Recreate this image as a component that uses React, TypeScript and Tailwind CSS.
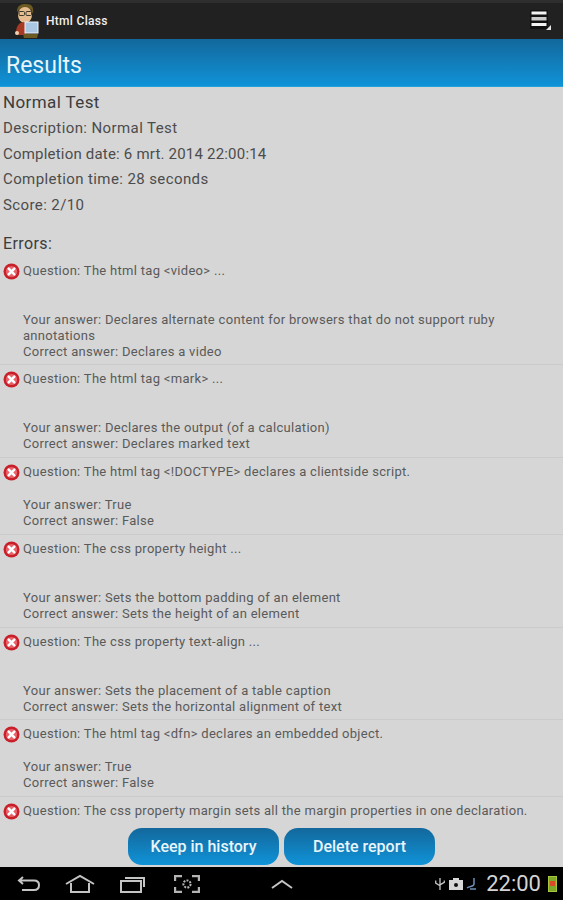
import React from 'react';

const errors = [
    { question: 'Question: The html tag <video> ...', gap: 'h-8', answer: 'Your answer: Declares alternate content for browsers that do not support ruby annotations', correct: 'Correct answer: Declares a video', pad: 'pb-[4px]' },
    { question: 'Question: The html tag <mark> ...', gap: 'h-8', answer: 'Your answer: Declares the output (of a calculation)', correct: 'Correct answer: Declares marked text', pad: 'pb-[5px]' },
    { question: 'Question: The html tag <!DOCTYPE> declares a clientside script.', gap: 'h-4', answer: 'Your answer: True', correct: 'Correct answer: False', pad: 'pb-[5px]' },
    { question: 'Question: The css property height ...', gap: 'h-8', answer: 'Your answer: Sets the bottom padding of an element', correct: 'Correct answer: Sets the height of an element', pad: 'pb-[5px]' },
    { question: 'Question: The css property text-align ...', gap: 'h-8', answer: 'Your answer: Sets the placement of a table caption', correct: 'Correct answer: Sets the horizontal alignment of text', pad: 'pb-[4px]' },
    { question: 'Question: The html tag <dfn> declares an embedded object.', gap: 'h-4', answer: 'Your answer: True', correct: 'Correct answer: False', pad: 'pb-[5px]' },
];

const ErrorIcon = () => (
    <svg width="17" height="17" viewBox="0 0 17 17" className="shrink-0">
        <circle cx="8.5" cy="8.5" r="8" fill="#c8202a" />
        <circle cx="8.5" cy="8.5" r="5.6" fill="#e8636a" />
        <path d="M5.7 5.7 L11.3 11.3 M11.3 5.7 L5.7 11.3" stroke="#fff" strokeWidth="2.6" strokeLinecap="round" />
    </svg>
);

const Avatar = () => (
    <svg width="26" height="36" viewBox="3 2 26 36">
        <path d="M6 11 C6 4 10 3 15 3 C21 3 23 6 22 13 L20 8 L9 8 Z" fill="#6b5a22" />
        <ellipse cx="14" cy="14" rx="7" ry="8" fill="#e6bd91" />
        <rect x="8" y="10.5" width="5.5" height="4" rx="1" fill="none" stroke="#3a3a2a" strokeWidth="1" />
        <rect x="15" y="10.5" width="5.5" height="4" rx="1" fill="none" stroke="#3a3a2a" strokeWidth="1" />
        <path d="M5 32 C5 24 9 21 14 21 C17 21 18 22 19 24 L14 34 L6 34 Z" fill="#a83a24" />
        <path d="M12 33 L27 33 L26 37 L13 37 Z" fill="#6b5a22" />
        <rect x="14" y="21" width="13" height="11" fill="#a9c6e2" stroke="#eef4fa" strokeWidth="1" />
        <circle cx="6" cy="32" r="2" fill="#f0d2b0" />
    </svg>
);

const MenuIcon = () => (
    <svg width="24" height="24" viewBox="0 0 24 24">
        <rect x="1" y="1" width="18" height="19" rx="1" fill="#111" />
        <rect x="2.5" y="2.5" width="15" height="3" fill="#f2f2f2" />
        <rect x="2.5" y="8" width="15" height="3.5" fill="#c9c9c9" />
        <rect x="2.5" y="14" width="15" height="3" fill="#f2f2f2" />
        <path d="M22 16 L22 21 L17 21 Z" fill="#e6e6e6" />
    </svg>
);

const NavBar = () => (
    <div className="h-[33px] bg-black flex items-center text-[#c8c8c8] shrink-0">
        <svg width="24" height="18" viewBox="0 0 24 18" className="ml-[17px]" fill="none" stroke="#c4c4c4" strokeWidth="2">
            <path d="M6 2 L2 5.5 L6 9 M2 5.5 H17 C21 5.5 22 8 22 10 C22 13 20 15 17 15 H5" />
        </svg>
        <svg width="30" height="20" viewBox="0 0 30 20" className="ml-[24px]" fill="none" stroke="#c4c4c4" strokeWidth="2">
            <path d="M1 10 L15 2 L29 10 M6 9 V18 H24 V9" />
        </svg>
        <svg width="26" height="18" viewBox="0 0 26 18" className="ml-[25px]" fill="none" stroke="#c4c4c4" strokeWidth="2">
            <rect x="1" y="6" width="20" height="11" />
            <path d="M5 3 H24 V12" />
        </svg>
        <svg width="26" height="18" viewBox="0 0 26 18" className="ml-[28px]" fill="none" stroke="#b4b4b4" strokeWidth="2.4">
            <path d="M1 6 V1 H8 M18 1 H25 V6 M1 12 V17 H8 M18 17 H25 V12" />
            <circle cx="13" cy="9" r="3.6" strokeWidth="2" strokeDasharray="2 1.2" />
        </svg>
        <svg width="22" height="10" viewBox="0 0 22 10" className="ml-[71px]" fill="none" stroke="#c4c4c4" strokeWidth="2">
            <path d="M1 9 L11 2 L21 9" />
        </svg>
        <div className="ml-auto flex items-center mr-[6px]">
            <svg width="12" height="16" viewBox="0 0 14 16" fill="none" stroke="#c8c8c8" strokeWidth="1.5">
                <path d="M7 1 V15 M2 4 V7 L7 10 M12 4 V6 L7 9" />
            </svg>
            <svg width="16" height="14" viewBox="0 0 16 14" className="ml-[2px]">
                <path d="M1 3 H5 V1 H11 V3 H15 V13 H1 Z" fill="#d8d8d8" />
                <circle cx="8" cy="8" r="2" fill="#111" />
            </svg>
            <svg width="12" height="14" viewBox="0 0 12 14" className="ml-[1px]" fill="none" stroke="#6f8fb8" strokeWidth="1.5">
                <path d="M9 1 V7 C9 10 5 9 2 11 M5 12 H11" />
            </svg>
            <span className="ml-[9px] text-[22px] leading-none text-[#d4d4d4]">22:00</span>
            <div className="ml-[7px] w-[9px] h-[16px] bg-[#7ea82a] border border-[#a8c83c] flex items-center justify-center">
                <div className="w-[5px] h-[5px] bg-[#d84a2a]" />
            </div>
        </div>
    </div>
);

const App: React.FC = () => {
    return (
        <div className="w-[563px] h-[900px] flex flex-col overflow-hidden bg-[#d6d6d6] font-['Roboto',sans-serif]">
            {/* Action bar */}
            <div className="h-[39px] shrink-0 bg-[#222121] border-t-[3px] border-[#2e2e2e] flex items-center pl-[14px] pr-[10px]">
                <Avatar />
                <span className="ml-[6px] text-[12px] font-medium tracking-[0.3px] text-[#f0f0f0]">Html Class</span>
                <div className="ml-auto"><MenuIcon /></div>
            </div>
            {/* Title */}
            <div className="h-[48px] shrink-0 bg-gradient-to-b from-[#12689c] to-[#0f93d8] border-b border-[#27a0de] flex items-center pl-[6px] pt-[7px]">
                <span className="text-[23px] text-[#e8f6fc]">Results</span>
            </div>
            <div className="flex-1 overflow-hidden text-[#4c4c4c]">
                <div className="pl-[3px] pt-[2px] text-[15px] tracking-[0.4px]">
                    <div className="h-[26px] leading-[26px] text-[17px] text-[#3c3c3c]">Normal Test</div>
                    <div className="h-[26px] leading-[26px]">Description: Normal Test</div>
                    <div className="h-[26px] leading-[26px] tracking-[0.2px]">Completion date: 6 mrt. 2014 22:00:14</div>
                    <div className="h-[25px] leading-[25px]">Completion time: 28 seconds</div>
                    <div className="h-[26px] leading-[26px]">Score: 2/10</div>
                    <div className="mt-[13px] h-[26px] leading-[26px] text-[16px] text-[#3c3c3c]">Errors:</div>
                </div>
                <div>
                    {errors.map((error) => (
                        <div key={error.question} className={`flex pl-[3px] pt-[6px] ${error.pad} border-b border-[#cbcbcb] text-[13px] leading-[16px] tracking-[0.3px] text-[#5a5a5a]`}>
                            <ErrorIcon />
                            <div className="ml-[3px] pr-[40px]">
                                <div>{error.question}</div>
                                <div className={`${error.gap} mb-[1px]`} />
                                <div>{error.answer}</div>
                                <div>{error.correct}</div>
                            </div>
                        </div>
                    ))}
                    <div className="flex pl-[3px] pt-[6px] text-[13px] leading-[16px] tracking-[0.3px] text-[#5a5a5a]">
                        <ErrorIcon />
                        <div className="ml-[3px]">Question: The css property margin sets all the margin properties in one declaration.</div>
                    </div>
                </div>
            </div>
            {/* Buttons */}
            <div className="h-[39px] shrink-0 flex items-start justify-center gap-[5px]">
                <button className="w-[151px] h-[37px] rounded-[14px] bg-gradient-to-b from-[#12689c] to-[#0f93d8] text-[16px] font-medium text-[#e8f6fc]">Keep in history</button>
                <button className="w-[151px] h-[37px] rounded-[14px] bg-gradient-to-b from-[#12689c] to-[#0f93d8] text-[16px] font-medium text-[#e8f6fc]">Delete report</button>
            </div>
            <NavBar />
        </div>
    );
};

export default App;
